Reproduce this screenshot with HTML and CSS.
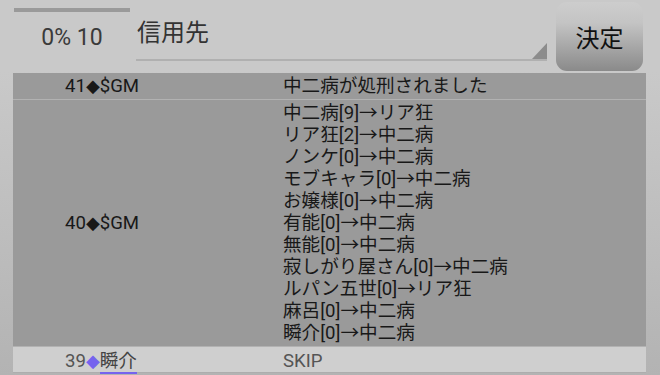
FILE: index.html
```html
<!DOCTYPE html>
<html lang="ja">
<head>
  <meta charset="UTF-8">
  <title>投票</title>
  <link rel="stylesheet" href="styles.css">
</head>
<body>

<header class="top">
  <div class="stat">
    <div class="stat-bar"></div>
    <div class="stat-text">0% 10</div>
  </div>
  <div class="picker">
    <span class="picker-value">信用先</span>
    <span class="picker-arrow"></span>
  </div>
  <button class="decide" type="button">決定</button>
</header>

<div class="log">
  <div class="log-row">
    <div class="log-who">41<span class="dia">◆</span>$GM</div>
    <div class="log-msg">中二病が処刑されました</div>
  </div>
  <div class="log-row">
    <div class="log-who">40<span class="dia">◆</span>$GM</div>
    <div class="log-msg">
      <div>中二病[9]→リア狂</div>
      <div>リア狂[2]→中二病</div>
      <div>ノンケ[0]→中二病</div>
      <div>モブキャラ[0]→中二病</div>
      <div>お嬢様[0]→中二病</div>
      <div>有能[0]→中二病</div>
      <div>無能[0]→中二病</div>
      <div>寂しがり屋さん[0]→中二病</div>
      <div>ルパン五世[0]→リア狂</div>
      <div>麻呂[0]→中二病</div>
      <div>瞬介[0]→中二病</div>
    </div>
  </div>
  <div class="log-row log-row--me">
    <div class="log-who">39<span class="dia">◆</span><span class="name">瞬介</span></div>
    <div class="log-msg">SKIP</div>
  </div>
</div>

</body>
</html>
```

FILE: styles.css
```css
body {
  margin: 0;
  width: 660px;
  height: 375px;
  overflow: hidden;
  background: linear-gradient(#c9c9c9 19%, #b3b3b3);
  font-family: Roboto, "Noto Sans CJK JP", sans-serif;
  color: #181818;
}

/* header: stats, target picker, submit */
.top {
  display: flex;
  height: 73px;
}

.stat {
  margin-left: 14px;
  width: 116px;
  padding-top: 8px;
}

.stat-bar {
  height: 4px;
  background: #9a9a9a;
}

.stat-text {
  margin-top: 13px;
  text-align: center;
  font-size: 23px;
  line-height: 26px;
  color: #3a3a3a;
}

.picker {
  position: relative;
  margin-left: 6px;
  width: 411px;
  height: 61px;
  padding-top: 2px;
  box-sizing: border-box;
  border-bottom: 2px solid #b0b0b0;
  display: flex;
  align-items: center;
}

.picker-value {
  padding-left: 1px;
  font-family: "Noto Sans CJK JP", sans-serif;
  font-size: 24px;
  line-height: 1;
  color: #333;
}

.picker-arrow {
  position: absolute;
  right: 0;
  bottom: 0;
  width: 15px;
  height: 16px;
  background: #8c8c8c;
  clip-path: polygon(100% 0, 100% 100%, 0 100%);
}

.decide {
  margin: 2px 0 0 9px;
  width: 87px;
  height: 69px;
  padding: 0;
  border: 0;
  border-radius: 11px;
  background: linear-gradient(#cdcdcd, #c4c4c4 30%, #8a8a8a);
  font-family: "Noto Sans CJK JP", sans-serif;
  font-size: 24px;
  color: #111;
}

/* log table */
.log {
  margin: 0 14px 0 13px;
}

.log-row {
  display: grid;
  grid-template-columns: 270px 1fr;
  background: #9a9a9a;
  border-bottom: 1px solid #b2b2b2;
  font-size: 18.6px;
  line-height: 22px;
  padding: 2px 0;
}

.log-who {
  padding-left: 52px;
  align-self: center;
}

.dia {
  font-family: "DejaVu Sans", sans-serif;
  font-size: 18px;
}

.log-row--me {
  background: #cfcfcf;
  padding: 3px 0 0;
  color: #555;
  border-bottom-color: #adadad;
}

.log-row--me .dia {
  color: #7563ee;
}

.log-row--me .name {
  color: #444;
  border-bottom: 2px solid #7563ee;
}
```
